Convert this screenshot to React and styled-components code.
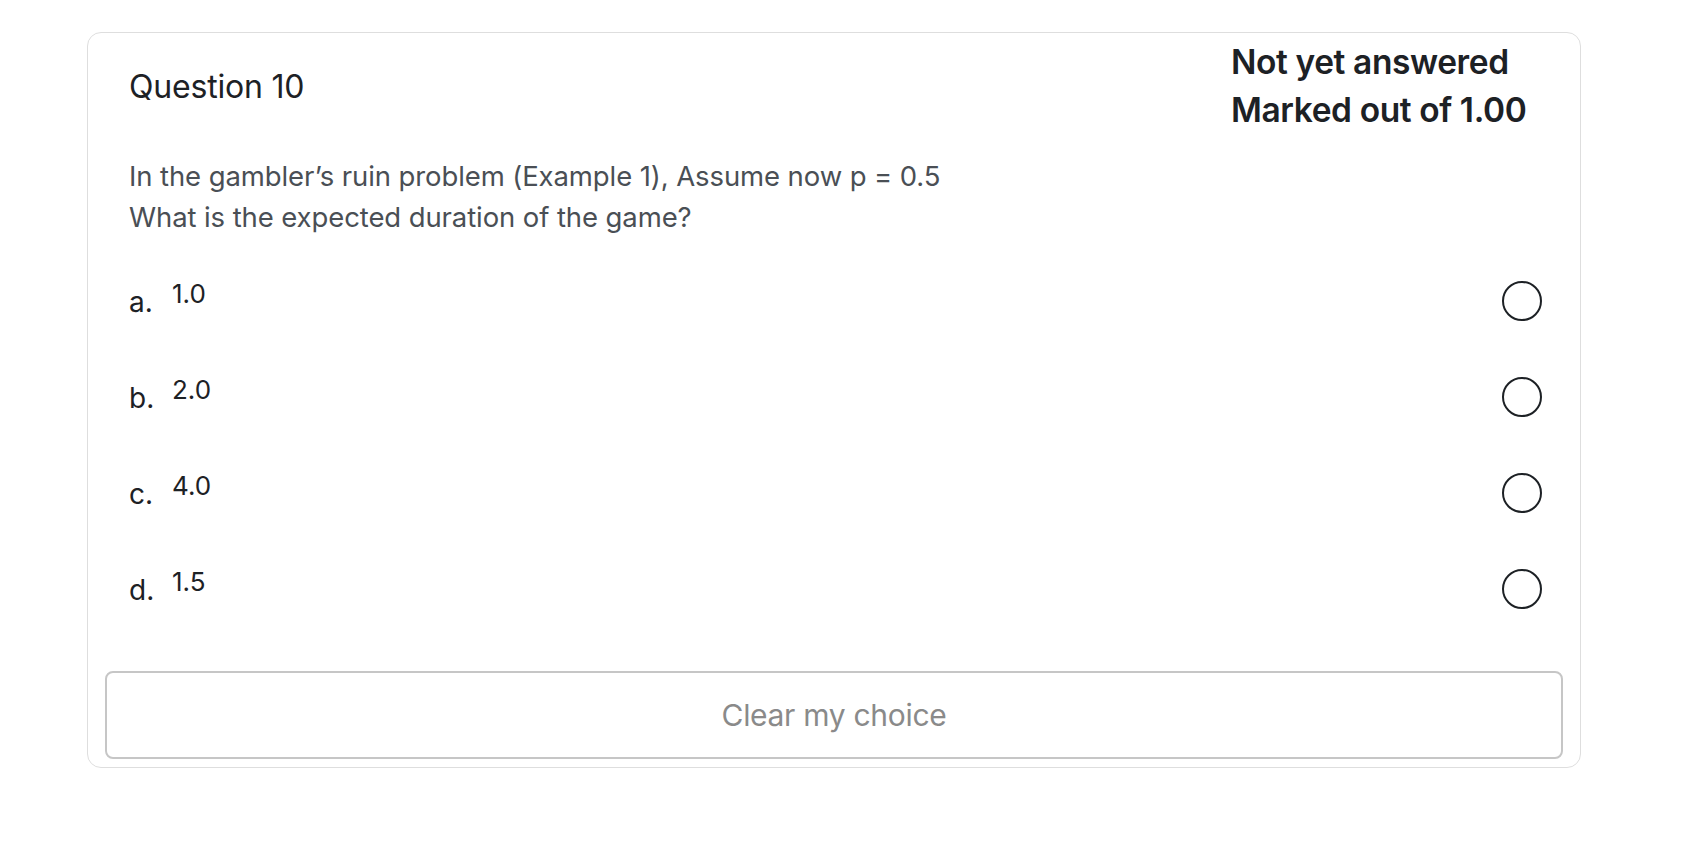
import styled, { createGlobalStyle } from 'styled-components'

const GlobalStyle = createGlobalStyle`
  html, body {
    margin: 0;
    padding: 0;
    background: #ffffff;
  }
  body {
    font-family: Inter, "Noto Sans", "Liberation Sans", sans-serif;
    color: #1d2125;
  }
`

const Page = styled.div`
  padding: 32px 0 0 87px;
`

const Card = styled.div`
  box-sizing: border-box;
  width: 1494px;
  border: 1px solid #dedede;
  border-radius: 14px;
  padding: 0 17px 8px;
  display: flex;
  flex-direction: column;
`

const Inner = styled.div`
  padding: 5px 21px 0 24px;
  display: flex;
  flex-direction: column;
`

const Header = styled.div`
  display: flex;
  align-items: center;
  justify-content: space-between;
`

const Title = styled.h3`
  margin: 0;
  font-size: 32px;
  font-weight: 400;
  color: #1d2125;
  letter-spacing: -0.2px;
`

const Info = styled.div`
  width: 311px;
  font-size: 33.5px;
  font-weight: 600;
  line-height: 48px;
  color: #1d2125;
  letter-spacing: -0.4px;
`

const QText = styled.div`
  margin-top: 22px;
  font-size: 27.5px;
  line-height: 41px;
  color: #4a4f55;
  letter-spacing: -0.1px;
`

const Answers = styled.div`
  margin-top: 15px;
  display: flex;
  flex-direction: column;
`

const Row = styled.div`
  height: 96px;
  display: flex;
  align-items: center;
`

const Label = styled.span`
  font-size: 28px;
  line-height: 28px;
  margin-top: 1px;
  width: 43px;
  color: #1d2125;
`

const AnswerText = styled.span`
  flex: 1;
  font-size: 26px;
  line-height: 26px;
  margin-bottom: 15px;
  color: #1d2125;
`

const Radio = styled.span`
  box-sizing: border-box;
  width: 40px;
  height: 40px;
  margin-top: -1px;
  border: 2px solid #1d2125;
  border-radius: 50%;
  background: #ffffff;
`

const ClearButton = styled.button`
  margin-top: 34px;
  height: 88px;
  width: 100%;
  box-sizing: border-box;
  border: 2px solid #c6c6c6;
  border-radius: 8px;
  background: #ffffff;
  font-family: Inter, "Noto Sans", "Liberation Sans", sans-serif;
  font-size: 30px;
  color: #8a8a8a;
  letter-spacing: -0.3px;
  cursor: pointer;
`

const answers = [
  { label: 'a.', text: '1.0' },
  { label: 'b.', text: '2.0' },
  { label: 'c.', text: '4.0' },
  { label: 'd.', text: '1.5' },
]

export default function App() {
  return (
    <Page>
      <GlobalStyle />
      <Card>
        <Inner>
          <Header>
            <Title>Question 10</Title>
            <Info>
              <div>Not yet answered</div>
              <div>Marked out of 1.00</div>
            </Info>
          </Header>
          <QText>
            <div>In the gambler’s ruin problem (Example 1), Assume now p = 0.5</div>
            <div>What is the expected duration of the game?</div>
          </QText>
          <Answers>
            {answers.map(a => (
              <Row key={a.label}>
                <Label>{a.label}</Label>
                <AnswerText>{a.text}</AnswerText>
                <Radio />
              </Row>
            ))}
          </Answers>
        </Inner>
        <ClearButton>Clear my choice</ClearButton>
      </Card>
    </Page>
  )
}
